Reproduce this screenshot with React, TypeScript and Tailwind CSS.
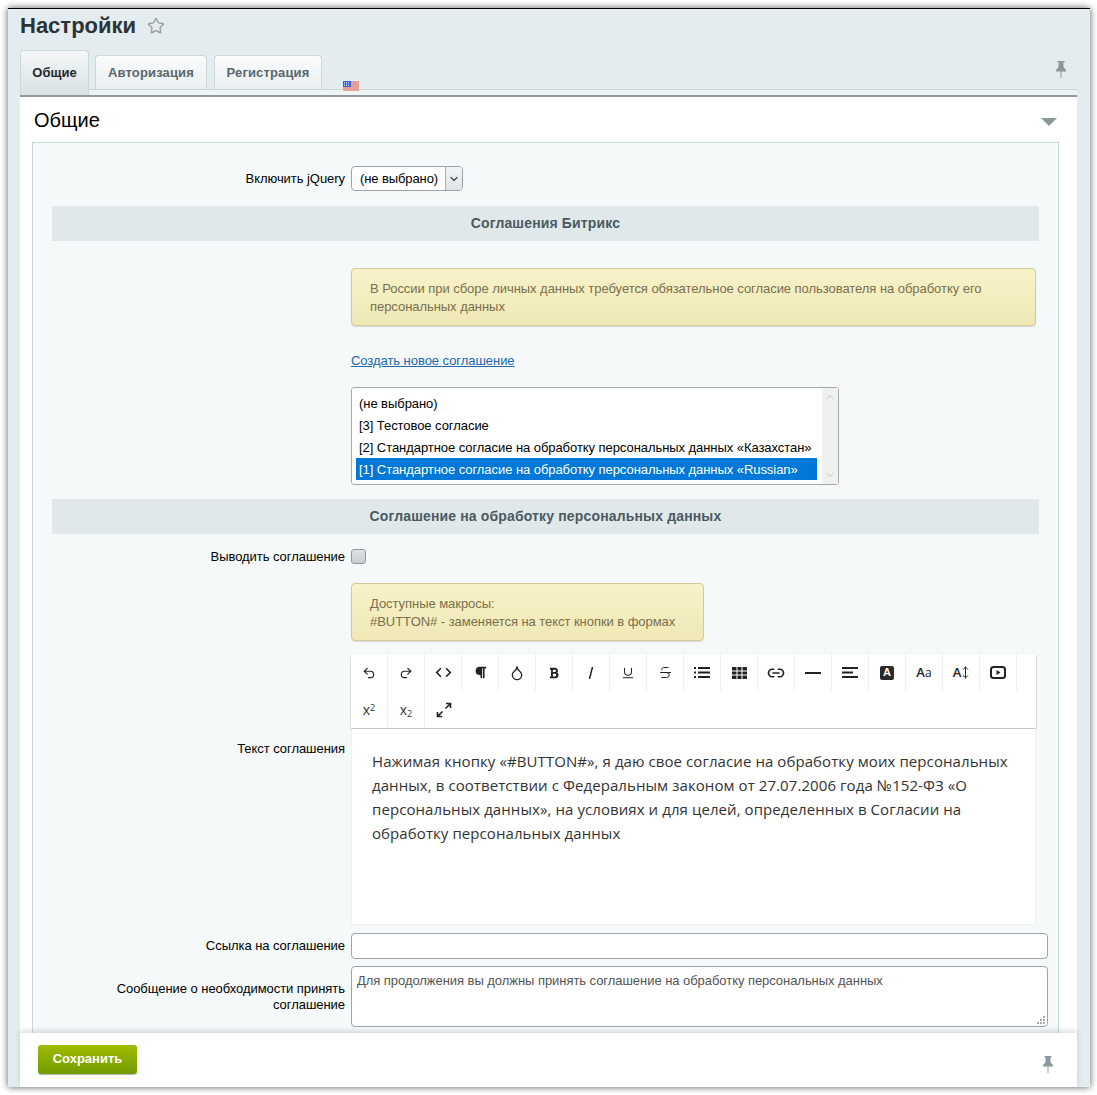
import type { ReactNode } from "react";
import { Undo2, Redo2, ChevronLeft, Droplet, Underline, Strikethrough, Link2, MoveVertical, Star } from "lucide-react";
import { FaBold, FaParagraph } from "react-icons/fa";
import { MdCode } from "react-icons/md";

const arial = "font-['Liberation_Sans',Arial,sans-serif]";

function Pin({ className }: { className: string }) {
  return (
    <svg viewBox="0 0 10 17" className={className} fill="#8d989c">
      <path d="M1.500 0h7v1.500H7.300l.4 5L10 9v1.500H0V9l2.300-2.500.4-5H1.500z" />
      <rect x="4.500" y="10" width="1" height="7" />
    </svg>
  );
}

function Flag() {
  return (
    <svg viewBox="0 0 16 11" className="absolute left-[323px] top-[31px] z-10 h-[11px] w-[16px]">
      <rect width="16" height="11" fill="#f4f4f4" />
      <path d="M0 1h16M0 3h16M0 5h16M0 7h16M0 9h16" stroke="#d8483c" strokeWidth="1" />
      <rect width="8" height="6" fill="#3f62c9" />
      <path d="M1 1.500h6M1 3h6M1 4.500h6" stroke="#dfe6fa" strokeWidth="0.8" strokeDasharray="1 1" />
    </svg>
  );
}

function Notice({ width, children }: { width: string; children: ReactNode }) {
  return (
    <div
      className={`${width} rounded-[4px] border border-[#d3cb94] bg-gradient-to-b from-[#f8f3c8] to-[#efe8b6] pb-[9px] pl-[18px] pr-[20px] pt-[11px] text-[13px] leading-[18px] tracking-[-0.05px] text-[#7b6f4d] shadow-[0_1px_1px_rgba(0,0,0,0.12)]`}
    >
      {children}
    </div>
  );
}

function Section({ children, className }: { children: ReactNode; className: string }) {
  return (
    <div
      className={`${className} flex h-[35px] items-center justify-center bg-[#e0e8ea] text-[14px] font-bold tracking-[0.15px] text-[#4b5a60]`}
    >
      {children}
    </div>
  );
}

function Row({
  label,
  className,
  children,
}: {
  label?: ReactNode;
  className?: string;
  children: ReactNode;
}) {
  return (
    <div className={`flex ${className ?? ""}`}>
      <div className="w-[293px] shrink-0 text-right text-[13px] leading-[16px] tracking-[-0.05px] text-black">{label}</div>
      <div className="ml-[6px] min-w-0 flex-1">{children}</div>
    </div>
  );
}

function ToolBtn({ children, noBorder }: { children: ReactNode; noBorder?: boolean }) {
  return (
    <div
      className={`flex h-[37px] w-[37px] items-center justify-center text-[#222] ${noBorder ? "" : "border-r border-[#efefef]"}`}
    >
      {children}
    </div>
  );
}

function Toolbar() {
  return (
    <div className="w-[685px] bg-white shadow-[0_1px_2px_rgba(0,0,0,0.3)]">
      <div className="flex flex-wrap">
        <ToolBtn><Undo2 size={14} strokeWidth={2} /></ToolBtn>
        <ToolBtn><Redo2 size={14} strokeWidth={2} /></ToolBtn>
        <ToolBtn><MdCode size={19} /></ToolBtn>
        <ToolBtn><FaParagraph size={13} /></ToolBtn>
        <ToolBtn><Droplet size={16} strokeWidth={2} /></ToolBtn>
        <ToolBtn><FaBold size={12} /></ToolBtn>
        <ToolBtn>
          <svg viewBox="0 0 6 12" className="h-[12px] w-[6px]" stroke="#222" strokeWidth="1.500">
            <path d="M4.500 0L1.500 12" />
          </svg>
        </ToolBtn>
        <ToolBtn><Underline size={14} strokeWidth={1.8} /></ToolBtn>
        <ToolBtn><Strikethrough size={15} strokeWidth={1.6} /></ToolBtn>
        <ToolBtn>
          <svg viewBox="0 0 16 11" className="h-[11px] w-[16px]" fill="#222">
            <path d="M0 0h2v2H0zM4 0h12v2H4zM0 4.500h2v2H0zM4 4.500h12v2H4zM0 9h2v2H0zM4 9h12v2H4z" />
          </svg>
        </ToolBtn>
        <ToolBtn>
          <svg viewBox="0 0 15 12" className="h-[12px] w-[15px]" fill="#222">
            <path d="M0 0h4.500v3.500H0zM5.500 0h4v3.500h-4zM10.500 0H15v3.500h-4.500zM0 4.500h4.500v3H0zM5.500 4.500h4v3h-4zM10.500 4.500H15v3h-4.500zM0 8.500h4.500V12H0zM5.500 8.500h4V12h-4zM10.500 8.500H15V12h-4.500z" />
          </svg>
        </ToolBtn>
        <ToolBtn><Link2 size={18} strokeWidth={2.2} /></ToolBtn>
        <ToolBtn>
          <svg viewBox="0 0 16 2" className="h-[2px] w-[16px]" fill="#222">
            <rect width="16" height="2" />
          </svg>
        </ToolBtn>
        <ToolBtn>
          <svg viewBox="0 0 16 11" className="h-[11px] w-[16px]" stroke="#222" strokeWidth="2">
            <path d="M0 1h16M0 5.500h11M0 10h16" />
          </svg>
        </ToolBtn>
        <ToolBtn>
          <span className={`${arial} flex h-[14px] w-[14px] items-center justify-center rounded-[2px] bg-[#2a2a2a] text-[11px] font-bold text-white`}>
            A
          </span>
        </ToolBtn>
        <ToolBtn>
          <span className="font-['Open_Sans',sans-serif] text-[13px] font-semibold">
            A<span className="text-[12px] font-normal">a</span>
          </span>
        </ToolBtn>
        <ToolBtn>
          <span className="ml-[3px] flex items-center font-['Open_Sans',sans-serif] text-[13px] font-semibold">
            A
            <MoveVertical size={13} strokeWidth={1.8} className="-ml-[2px]" />
          </span>
        </ToolBtn>
        <ToolBtn>
          <svg viewBox="0 0 16 13" className="h-[13px] w-[16px]">
            <rect x="1" y="1" width="14" height="11" rx="2.500" fill="none" stroke="#222" strokeWidth="2" />
            <path d="M6.500 4l4 2.500-4 2.500z" fill="#222" />
          </svg>
        </ToolBtn>
        <ToolBtn>
          <span className="font-['Open_Sans',sans-serif] text-[14px] text-[#333]">
            x<sup className="text-[9px]">2</sup>
          </span>
        </ToolBtn>
        <ToolBtn>
          <span className="font-['Open_Sans',sans-serif] text-[14px] text-[#333]">
            x<sub className="text-[9px]">2</sub>
          </span>
        </ToolBtn>
        <ToolBtn noBorder>
          <svg viewBox="0 0 16 16" className="h-[16px] w-[16px]" stroke="#222" strokeWidth="1.600" fill="none">
            <path d="M9.500 6.500L14 2M10 1.500h4.500V6M6.500 9.500L2 14M1.500 10v4.500H6" />
          </svg>
        </ToolBtn>
      </div>
    </div>
  );
}

const options = [
  "(не выбрано)",
  "[3] Тестовое согласие",
  "[2] Стандартное согласие на обработку персональных данных «Казахстан»",
];

export default function App() {
  return (
    <div className={`h-[1095px] w-[1097px] overflow-hidden bg-white pt-[8px] ${arial}`}>
      <div className="ml-[8px] flex h-[1079px] w-[1082px] flex-col border-t border-black bg-[#e3ecee] shadow-[0_0_7px_rgba(0,0,0,0.65)]">
        <div className="flex h-[30px] items-center pl-[12px] pt-[4px]">
          <h1 className="text-[22px] font-bold leading-[26px] text-[#2b3338]">Настройки</h1>
          <Star size={18} strokeWidth={2} className="ml-[11px] text-[#98a4a8]" />
        </div>

        <div className="relative ml-[12px] mr-[13px] mt-[11px] flex h-[39px] items-end">
          <div className="z-10 -mb-[6px] flex h-[45px] w-[69px] items-start justify-center rounded-t-[4px] border border-b-0 border-[#cdd6d9] bg-gradient-to-b from-[#f4f7f8] to-[#d9e1e4] pt-[12px] text-[13px] font-bold text-[#1d2a30]">
            Общие
          </div>
          <div className="ml-[6px] flex h-[34px] w-[112px] items-center justify-center rounded-t-[4px] border border-b-0 border-[#cfd7da] bg-gradient-to-b from-[#fbfcfc] to-[#e9eff0] text-[13px] font-bold tracking-[0.15px] text-[#5a676e]">
            Авторизация
          </div>
          <div className="ml-[7px] flex h-[34px] w-[108px] items-center justify-center rounded-t-[4px] border border-b-0 border-[#cfd7da] bg-gradient-to-b from-[#fbfcfc] to-[#e9eff0] text-[13px] font-bold tracking-[0.15px] text-[#5a676e]">
            Регистрация
          </div>
          <Flag />
          <Pin className="absolute right-[11px] top-[11px] h-[17px] w-[10px]" />
        </div>
        <div className="ml-[12px] mr-[13px] h-[6px] border-t border-[#cdd5d8] bg-[#eef3f4]" />

        <div className="ml-[12px] mr-[13px] min-h-0 flex-1 overflow-hidden border-t-2 border-[#8f989c] bg-white">
          <div className="relative flex h-[45px] items-center pl-[14px]">
            <h2 className="text-[20px] leading-[46px] text-black">Общие</h2>
            <div className="absolute right-[20px] top-[21px] h-0 w-0 border-x-[8px] border-t-[8px] border-x-transparent border-t-[#8c979b]" />
          </div>
          <div className="relative ml-[12px] mr-[18px] h-[900px] border border-[#c9d6dc] bg-[#f5f9fa] px-[19px] pt-[23px]">
            <Row label={<span className="leading-[25px]">Включить jQuery</span>}>
              <div className="flex h-[25px] w-[112px] rounded-[4px] border border-[#9ba4a8] bg-white text-[13px] tracking-[-0.1px]">
                <span className="flex flex-1 items-center pl-[8px] text-black">(не выбрано)</span>
                <span className="flex w-[17px] items-center justify-center rounded-r-[3px] border-l border-[#a6aeb2] bg-gradient-to-b from-[#f3f5f5] to-[#dfe4e6]">
                  <ChevronLeft size={12} strokeWidth={2.4} className="-rotate-90 text-[#444]" />
                </span>
              </div>
            </Row>

            <Section className="mt-[15px]">Соглашения Битрикс</Section>

            <Row className="mt-[27px]">
              <Notice width="w-[685px]">
                В России при сборе личных данных требуется обязательное согласие пользователя на обработку его персональных данных
              </Notice>
              <div className="mt-[26px] text-[13px] leading-[17px] tracking-[-0.05px]">
                <a className="text-[#2067b0] underline">Создать новое соглашение</a>
              </div>
              <div className="mt-[18px] flex h-[98px] w-[488px] rounded-[3px] border border-[#a5abad] bg-white pl-[4px] pt-[4px] text-[13px] leading-[24px] tracking-[-0.06px] text-black">
                <div className="w-[461px]">
                  {options.map((o) => (
                    <div key={o} className="h-[22px] whitespace-nowrap pl-[3px]">{o}</div>
                  ))}
                  <div className="h-[22px] whitespace-nowrap bg-[#0078d7] pl-[3px] text-white">
                    [1] Стандартное согласие на обработку персональных данных «Russian»
                  </div>
                </div>
                <div className="-mt-[4px] ml-[5px] flex h-[96px] w-[16px] flex-col items-center justify-between bg-[#f0f0f0] py-[3px]">
                  <ChevronLeft size={12} strokeWidth={2} className="rotate-90 text-[#c4c4c4]" />
                  <ChevronLeft size={12} strokeWidth={2} className="-rotate-90 text-[#c4c4c4]" />
                </div>
              </div>
            </Row>

            <Section className="mt-[14px]">Соглашение на обработку персональных данных</Section>

            <Row className="mt-[15px]" label="Выводить соглашение">
              <div className="h-[15px] w-[15px] rounded-[3px] border border-[#8d979b] bg-gradient-to-b from-[#dfe3e4] to-[#c9ced0]" />
            </Row>

            <Row className="mt-[18px]">
              <Notice width="w-[353px]">
                Доступные макросы:
                <br />
                #BUTTON# - заменяется на текст кнопки в формах
              </Notice>
            </Row>

            <Row className="mt-[13px]" label={<span className="mt-[87px] block">Текст соглашения</span>}>
              <Toolbar />
              <div className="mt-[1px] h-[196px] w-[685px] border border-t-0 border-[#eef1f2] bg-white py-[20px] pl-[20px] pr-[20px] font-['Open_Sans',sans-serif] text-[15px] leading-[24px] tracking-[0.08px] text-[#333]">
                Нажимая кнопку «#BUTTON#», я даю свое согласие на обработку моих персональных данных, в соответствии с Федеральным законом от 27.07.2006 года №152-ФЗ «О персональных данных», на условиях и для целей, определенных в Согласии на обработку персональных данных
              </div>
            </Row>

            <Row className="mt-[8px]" label={<span className="leading-[26px]">Ссылка на соглашение</span>}>
              <div className="h-[26px] w-[697px] rounded-[4px] border border-[#9ba4a8] bg-white" />
            </Row>

            <Row className="mt-[7px]" label={<span className="mt-[15px] block">Сообщение о необходимости принять соглашение</span>}>
              <div className="relative h-[61px] w-[697px] rounded-[4px] border border-[#9ba4a8] bg-white px-[5px] py-[6px] text-[13px] leading-[16px] tracking-[-0.05px] text-[#555]">
                Для продолжения вы должны принять соглашение на обработку персональных данных
                <svg viewBox="0 0 9 9" className="absolute bottom-[1px] right-[1px] h-[9px] w-[9px]" fill="#a9a9a9">
                  <path d="M6 0h2v2H6zM3 3h2v2H3zM6 3h2v2H6zM0 6h2v2H0zM3 6h2v2H3zM6 6h2v2H6z" />
                </svg>
              </div>
            </Row>
          </div>
        </div>

        <div className="relative z-10 ml-[12px] mr-[13px] flex h-[54px] shrink-0 items-start bg-white pl-[18px] pt-[12px] shadow-[0_-2px_5px_rgba(90,110,120,0.25)]">
          <button className="flex h-[29px] w-[99px] items-center justify-center rounded-[3px] bg-gradient-to-b from-[#a1bc00] to-[#719c00] pb-[2px] text-[13px] font-bold text-white shadow-[0_1px_1px_rgba(0,0,0,0.3)]">
            Сохранить
          </button>
          <Pin className="absolute right-[24px] top-[23px] h-[17px] w-[10px]" />
        </div>
      </div>
    </div>
  );
}
